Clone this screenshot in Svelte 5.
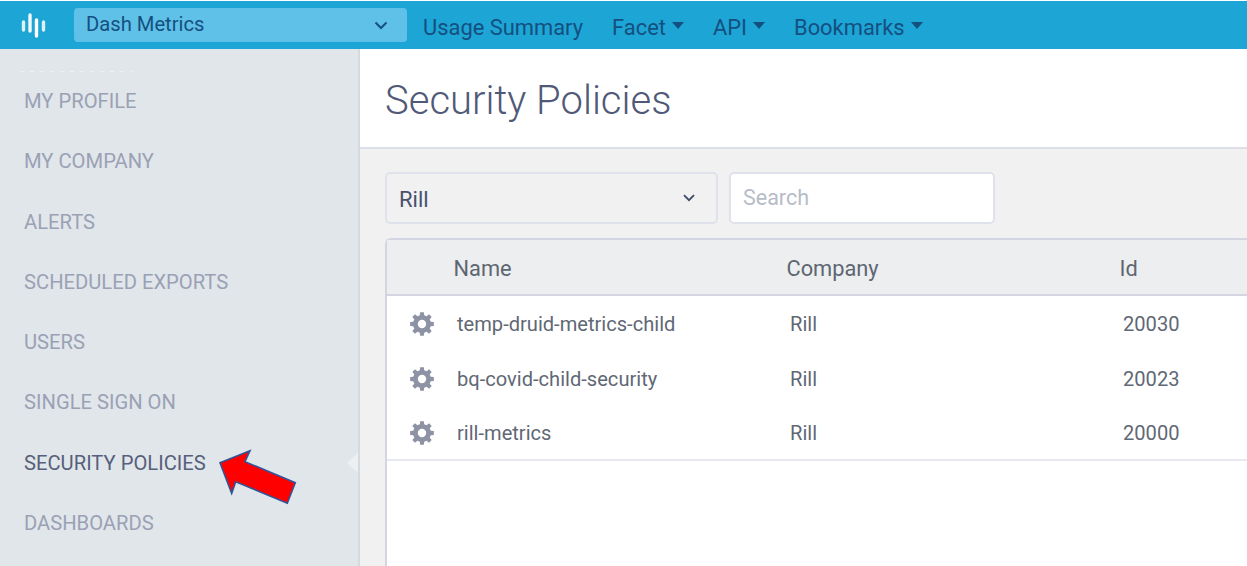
<script>
  const menu = ['MY PROFILE','MY COMPANY','ALERTS','SCHEDULED EXPORTS','USERS','SINGLE SIGN ON','SECURITY POLICIES','DASHBOARDS'];
  const rows = [
    {name:'temp-druid-metrics-child',company:'Rill',id:'20030'},
    {name:'bq-covid-child-security',company:'Rill',id:'20023'},
    {name:'rill-metrics',company:'Rill',id:'20000'}
  ];
  function gearPath(){
    const n=8, ro=12, ri=9, hole=4.2, c=12;
    const pts=[];
    for(let i=0;i<n;i++){
      const a=(i/n)*Math.PI*2-Math.PI/2, s=Math.PI/n;
      const p=(r,t)=>`${(c+r*Math.cos(t)).toFixed(2)} ${(c+r*Math.sin(t)).toFixed(2)}`;
      pts.push(p(ri,a-s*0.62),p(ro,a-s*0.4),p(ro,a+s*0.4),p(ri,a+s*0.62));
    }
    return 'M'+pts.join('L')+`Z M${c-hole} ${c}a${hole} ${hole} 0 1 0 ${2*hole} 0a${hole} ${hole} 0 1 0 ${-2*hole} 0Z`;
  }
  const gear = gearPath();
</script>

<div class="page">
  <header class="topbar">
    <svg class="logo" width="28" height="28" viewBox="0 0 28 28" aria-hidden="true">
      <g stroke="#fff" stroke-width="3.4" stroke-linecap="round">
        <line x1="3.5" y1="11" x2="3.5" y2="19" opacity=".85"/>
        <line x1="10" y1="4" x2="10" y2="20" opacity=".95"/>
        <line x1="16.5" y1="9" x2="16.5" y2="25"/>
        <line x1="23.5" y1="11" x2="23.5" y2="19" opacity=".85"/>
      </g>
    </svg>
    <div class="switcher">
      <span>Dash Metrics</span>
      <svg width="14" height="9" viewBox="0 0 14 9" aria-hidden="true"><path d="M1.5 1.5 7 7l5.5-5.5" fill="none" stroke="#14507f" stroke-width="2"/></svg>
    </div>
    <nav class="nav">
      <span class="link">Usage Summary</span>
      <span class="link caret">Facet</span>
      <span class="link caret">API</span>
      <span class="link caret">Bookmarks</span>
    </nav>
  </header>

  <div class="body">
    <aside class="sidebar">
      <div class="ghost"></div>
      {#each menu as item}
        <div class="item" class:active={item === 'SECURITY POLICIES'}>{item}</div>
      {/each}
      <div class="notch"></div>
    </aside>

    <main class="main">
      <div class="title"><h1>Security Policies</h1></div>
      <div class="content">
        <div class="filters">
          <div class="select">
            <span>Rill</span>
            <svg width="12" height="8" viewBox="0 0 12 8" aria-hidden="true"><path d="M1 1.2 6 6.2l5-5" fill="none" stroke="#3d4a66" stroke-width="1.8"/></svg>
          </div>
          <div class="search">Search</div>
        </div>
        <div class="table">
          <div class="row head">
            <span></span><span>Name</span><span>Company</span><span>Id</span>
          </div>
          {#each rows as r}
            <div class="row">
              <svg class="gear" width="24" height="24" viewBox="0 0 24 24" aria-hidden="true"><path d={gear} fill="#8d93a4" fill-rule="evenodd"/></svg>
              <span>{r.name}</span><span>{r.company}</span><span>{r.id}</span>
            </div>
          {/each}
        </div>
      </div>
    </main>
  </div>

  <svg class="arrow" width="90" height="68" viewBox="215 445 90 68" aria-hidden="true">
    <polygon points="220,462.7 250,450.7 245,461.7 295.3,482.7 287.3,503.3 235.7,481.7 231.7,493.3" fill="#ff0000" stroke="#2f5597" stroke-width="1.6" stroke-linejoin="miter"/>
  </svg>
</div>

<style>
  :global(body){margin:0;background:#fff;}
  .page{position:relative;width:1247px;height:566px;overflow:hidden;font-family:Roboto,"Liberation Sans",sans-serif;}
  .topbar{box-sizing:border-box;height:49px;margin-top:1px;background:#1da5d6;display:flex;align-items:center;padding-left:20px;margin-bottom:-1px;}
  .logo{margin-right:26px;flex:none;margin-top:-1px;}
  .switcher{box-sizing:border-box;width:333px;height:34px;margin-top:-2px;background:#60c1e8;border-radius:4px;display:flex;align-items:center;justify-content:space-between;padding:0 19px 2px 12px;color:#14507f;font-size:20.2px;}
  .switcher svg{margin-top:4px;}
  .nav{display:flex;align-items:center;margin-left:16px;margin-top:4px;gap:29px;color:#14507f;font-size:21.9px;}
  .link.caret::after{content:"";display:inline-block;margin-left:6px;vertical-align:6px;border-left:6.5px solid transparent;border-right:6.5px solid transparent;border-top:7px solid #14507f;}
  .body{display:flex;height:517px;}
  .sidebar{position:relative;box-sizing:border-box;width:360px;flex:none;background:#e1e6ea;border-right:2px solid #d4dbe0;padding-top:22px;overflow:hidden;}
  .ghost{position:absolute;left:20px;top:22px;width:112px;height:1px;background:repeating-linear-gradient(90deg,rgba(255,255,255,.4) 0 4px,transparent 4px 10px);}
  .item{height:60.3px;line-height:60.3px;padding-left:24px;font-size:20.2px;color:#9aa1b5;white-space:nowrap;}
  .item.active{color:#56607a;}
  .notch{position:absolute;right:0;top:404px;border-top:10px solid transparent;border-bottom:10px solid transparent;border-right:11px solid #edf0f2;}
  .main{flex:1;min-width:0;display:flex;flex-direction:column;background:#f1f1f2;}
  .title{box-sizing:border-box;height:100px;background:#fff;border-bottom:2px solid #dcdfe8;padding:2px 0 0 25px;}
  h1{margin:0;font-weight:300;font-size:40px;line-height:100px;color:#505977;}
  .content{flex:1;padding:23px 0 0 25px;display:flex;flex-direction:column;min-height:0;}
  .filters{display:flex;gap:11px;height:52px;}
  .select,.search{box-sizing:border-box;height:52px;border:2px solid #dfe2ea;border-radius:5px;display:flex;align-items:center;}
  .select{width:333px;justify-content:space-between;padding:2px 21px 0 12px;color:#47506e;font-size:22px;}
  .search{width:266px;background:#fff;padding-left:12px;color:#b6bcc8;padding-bottom:2px;font-size:21.5px;}
  .select svg{margin-top:-2px;}
  .table{flex:1;margin-top:14px;background:#fff;border-left:2px solid #d3d5e2;border-top:2px solid #d3d5e2;border-top-left-radius:6px;}
  .row{box-sizing:border-box;display:grid;grid-template-columns:70px 333px 333px 1fr;align-items:center;height:55px;font-size:20.1px;color:#5f6875;}
  .row:last-child{border-bottom:2px solid #e8e9ef;}
  .head{height:56px;background:#edeef0;border-bottom:2px solid #d3d5e2;font-size:21.8px;color:#5d6671;}
  .head span:nth-child(n+2){position:relative;left:-3.5px;top:1px;}
  .gear{margin-left:22.5px;}
  .arrow{position:absolute;left:215px;top:445px;}
</style>
